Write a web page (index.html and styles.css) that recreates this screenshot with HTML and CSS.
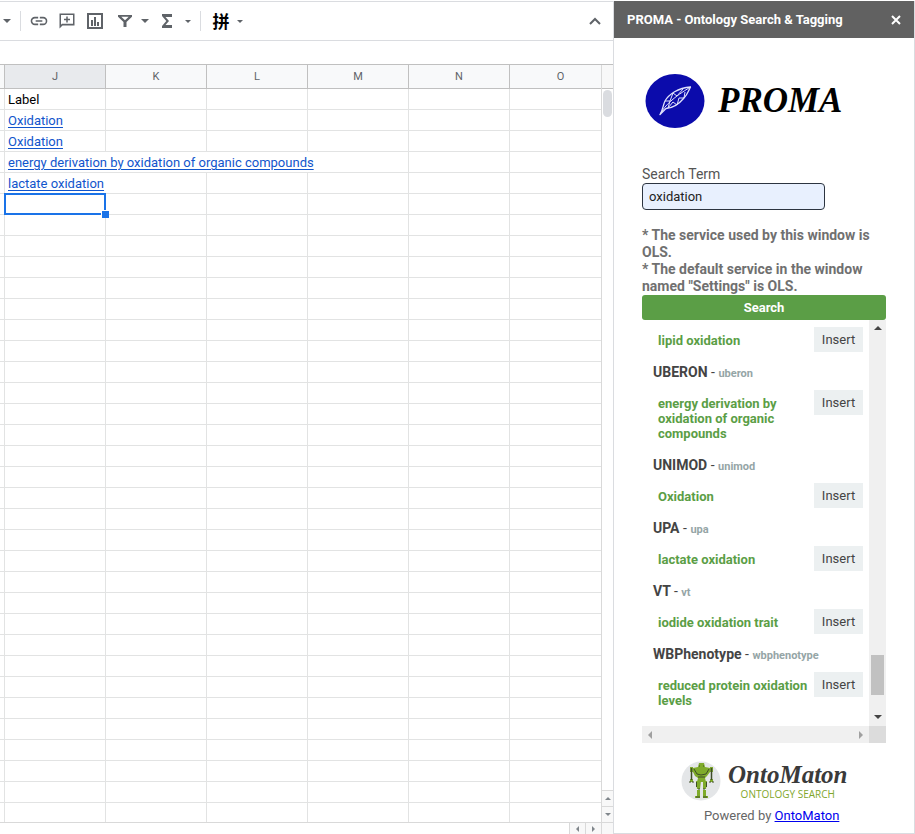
FILE: index.html
```html
<!DOCTYPE html>
<html lang="en">
<head>
<meta charset="utf-8">
<title>PROMA - Ontology Search &amp; Tagging</title>
<link rel="stylesheet" href="styles.css">
</head>
<body>
<div class="app">
  <main class="sheet">
    <div class="toolbar" role="toolbar" aria-label="Formatting">
      <button class="tool tool-arrow" aria-label="More"><svg width="8" height="4" viewBox="0 0 8 4"><path d="M0 0h8L4 4z"/></svg></button>
      <span class="divider"></span>
      <button class="tool" aria-label="Insert link"><svg width="20" height="20" viewBox="0 0 24 24"><path d="M3.9 12c0-1.71 1.39-3.1 3.1-3.1h4V7H7a5 5 0 0 0 0 10h4v-1.9H7c-1.71 0-3.1-1.39-3.1-3.1zM8 13h8v-2H8v2zm9-6h-4v1.9h4a3.1 3.1 0 0 1 0 6.2h-4V17h4a5 5 0 0 0 0-10z"/></svg></button>
      <button class="tool" aria-label="Insert comment"><svg width="18" height="18" viewBox="0 0 24 24"><path d="M2 2h20v16H6l-4 4V2zm2 2v13l1.200-1.200H20V4H4zm7 2h2v3h3v2h-3v3h-2v-3H8V9h3V6z"/></svg></button>
      <button class="tool" aria-label="Insert chart"><svg width="18" height="18" viewBox="0 0 18 18"><path d="M1 1h16v16H1V1zm2 2v12h12V3H3zm2 5h2v6H5V8zm3-3h2v9H8V5zm3 5h2v4h-2v-4z"/></svg></button>
      <button class="tool tool-filter" aria-label="Create a filter"><svg width="16" height="16" viewBox="0 0 16 16"><path d="M1 2h14v1.800L9.500 9v5h-3V9L1 3.800V2zm3.300 1.800L8 7.300l3.700-3.500H4.300z"/></svg></button>
      <button class="tool tool-arrow" aria-label="Filter views"><svg width="8" height="4" viewBox="0 0 8 4"><path d="M0 0h8L4 4z"/></svg></button>
      <button class="tool tool-sum" aria-label="Functions"><svg width="12" height="14" viewBox="0 0 12 14"><path d="M1 0h10v3H4.500L8 7l-3.500 4H11v3H1v-2l4.300-5L1 2z"/></svg></button>
      <button class="tool tool-small" aria-label="More functions"><svg width="6" height="3" viewBox="0 0 6 3"><path d="M0 0h6L3 3z"/></svg></button>
      <span class="divider"></span>
      <button class="tool tool-text" lang="zh">拼</button>
      <button class="tool tool-small" aria-label="Input tools"><svg width="6" height="3" viewBox="0 0 6 3"><path d="M0 0h6L3 3z"/></svg></button>
      <button class="tool tool-end" aria-label="Hide the menus"><svg width="12" height="8" viewBox="0 0 12 8"><path d="M1 7l5-5 5 5" fill="none" stroke="currentColor" stroke-width="2"/></svg></button>
    </div>
    <div class="formula"></div>
    <div class="grid-area">
      <div class="cells">
        <table>
          <colgroup><col class="col-edge"><col class="col"><col class="col"><col class="col"><col class="col"><col class="col"><col></colgroup>
          <thead><tr><th></th><th class="current">J</th><th>K</th><th>L</th><th>M</th><th>N</th><th>O</th></tr></thead>
          <tbody id="rows">
            <tr><td></td><td>Label</td><td></td><td></td><td></td><td></td><td></td></tr>
            <tr><td></td><td><a href="#">Oxidation</a></td><td></td><td></td><td></td><td></td><td></td></tr>
            <tr><td></td><td><a href="#">Oxidation</a></td><td></td><td></td><td></td><td></td><td></td></tr>
            <tr><td></td><td colspan="4"><a href="#">energy derivation by oxidation of organic compounds</a></td><td></td><td></td></tr>
            <tr><td></td><td class="tight"><a href="#">lactate oxidation</a></td><td></td><td></td><td></td><td></td><td></td></tr>
            <tr><td></td><td class="selected"><span class="handle"></span></td><td></td><td></td><td></td><td></td><td></td></tr>
          </tbody>
        </table>
      </div>
      <div class="vbar">
        <div class="vbar-head"></div>
        <div class="vbar-track"><div class="vbar-thumb"></div></div>
        <button aria-label="Scroll up"><svg width="6" height="3" viewBox="0 0 6 3"><path d="M0 3h6L3 0z"/></svg></button>
        <button aria-label="Scroll down"><svg width="6" height="3" viewBox="0 0 6 3"><path d="M0 0h6L3 3z"/></svg></button>
      </div>
    </div>
    <div class="hbar">
      <button aria-label="Scroll left"><svg width="3" height="6" viewBox="0 0 3 6"><path d="M3 0v6L0 3z"/></svg></button>
      <button aria-label="Scroll right"><svg width="3" height="6" viewBox="0 0 3 6"><path d="M0 0v6l3-3z"/></svg></button>
      <span class="corner"></span>
    </div>
  </main>

  <aside class="sidebar">
    <header class="side-head">
      <h1>PROMA - Ontology Search &amp; Tagging</h1>
      <button class="close" aria-label="Close"><svg width="10" height="10" viewBox="0 0 10 10"><path d="M1 1l8 8M9 1L1 9" stroke="#fff" stroke-width="2"/></svg></button>
    </header>
    <div class="side-body">
      <div class="brand">
        <svg width="60" height="54" viewBox="0 0 60 54"><ellipse cx="30" cy="27" rx="29.500" ry="27" fill="#0b0bab"/><g fill="none" stroke="#dfe1fb" stroke-linejoin="round"><path d="M15 40.500C18 36 18 31 20 27C24 20 33 14 45.500 13C43 18 42 21 39 24C34 30 28 34 21 34.500Z" stroke-width="1.300"/><path d="M15 40.500C20 31 29 23 45.500 13M20 27l5 0 3-8 4 3 6-7M25 27l-2 7 5-6 4 3 2-7 5 0 1-6"/></g></svg>
        <span class="wordmark">PROMA</span>
      </div>
      <form class="search">
        <label for="term">Search Term</label>
        <input id="term" type="text" value="oxidation">
        <p>* The service used by this window is OLS.<br>* The default service in the window named "Settings" is OLS.</p>
        <button type="button">Search</button>
      </form>
      <div class="results">
        <div class="list">
          <div class="item"><a href="#">lipid oxidation</a><button>Insert</button></div>
          <h2>UBERON <span>-</span> <small>uberon</small></h2>
          <div class="item"><a href="#">energy derivation by oxidation of organic compounds</a><button>Insert</button></div>
          <h2>UNIMOD <span>-</span> <small>unimod</small></h2>
          <div class="item"><a href="#">Oxidation</a><button>Insert</button></div>
          <h2>UPA <span>-</span> <small>upa</small></h2>
          <div class="item"><a href="#">lactate oxidation</a><button>Insert</button></div>
          <h2>VT <span>-</span> <small>vt</small></h2>
          <div class="item"><a href="#">iodide oxidation trait</a><button>Insert</button></div>
          <h2>WBPhenotype <span>-</span> <small>wbphenotype</small></h2>
          <div class="item"><a href="#">reduced protein oxidation levels</a><button>Insert</button></div>
        </div>
        <div class="rail rail-v"><svg width="8" height="4" viewBox="0 0 8 4"><path d="M0 4h8L4 0z"/></svg><span class="rail-thumb"></span><svg width="8" height="4" viewBox="0 0 8 4"><path d="M0 0h8L4 4z"/></svg></div>
        <div class="rail rail-h"><svg width="4" height="8" viewBox="0 0 4 8"><path d="M4 0v8L0 4z"/></svg><svg width="4" height="8" viewBox="0 0 4 8"><path d="M0 0v8l4-4z"/></svg></div>
        <div class="rail-corner"></div>
      </div>
      <footer>
        <div class="onto">
          <svg width="40" height="40" viewBox="0 0 40 40"><circle cx="20" cy="20" r="19.500" fill="#e4e6e8"/><g fill="#7fab2b"><path d="M18 2h5l1 4 5 1v4l-3 4-2 2 1 4h-9l1-4-3-2-2-4V7l5-1z"/><path d="M15 20h5l-1 8h-3zM22 20h4l-1 8h-3zM16 29h3v6h-3zM22 29h3v6h-3zM14 35h5v2h-5zM22 35h5v2h-5z"/><path d="M9 6h3v5H9zM29 6h3v5h-3zM9 18h3v3H9zM29 18h3v3h-3z"/></g><g fill="none" stroke="#3f4d28"><path d="M10.500 7v12M30.500 7v12" stroke-width="1.500"/><path d="M13 8l3 5 4 1 5-1 3-5M18 5h1M22 5h1M17 16h7M15.500 21v5M25.500 21v5M17 28h2M22 28h2M15 36h4M22 36h4M9 20v2M12 20v2M29 20v2M32 20v2"/></g></svg>
          <div class="onto-text"><span class="onto-name">OntoMaton</span><span class="onto-sub">ONTOLOGY SEARCH</span></div>
        </div>
        <p>Powered by <a href="#">OntoMaton</a></p>
      </footer>
    </div>
  </aside>
</div>
<script src="rows.js"></script>
</body>
</html>
```
FILE: rows.js
```js
// Fill the rest of the sheet with empty rows.
const body = document.getElementById('rows');
for (let i = 0; i < 60; i++) {
  const row = body.insertRow();
  for (let c = 0; c < 7; c++) row.insertCell();
}
```
FILE: styles.css
```css
* { box-sizing: border-box; }
body { margin: 0; background: #fff; font-family: Roboto, "Liberation Sans", sans-serif; }
button { border: 0; padding: 0; background: none; font-family: inherit; }
svg { display: block; fill: currentColor; flex: none; }
h1, h2, p { margin: 0; }

.app { height: 100vh; padding-top: 1px; display: grid; grid-template-columns: minmax(0, 1fr) 302px; overflow: hidden; }

/* Spreadsheet */
.sheet { display: flex; flex-direction: column; min-width: 0; min-height: 0; border-top: 1px solid #dadce0; }
.toolbar { height: 39px; flex: none; display: flex; align-items: center; border-bottom: 1px solid #dadce0; color: #5f6368; padding: 0 12px 0 3px; }
.tool { width: 28px; height: 28px; display: flex; align-items: center; justify-content: center; color: inherit; }
.tool-arrow { width: 8px; }
.tool-filter { width: 32px; }
.tool-sum { width: 36px; }
.tool-small { width: 6px; }
.tool-text { width: 32px; font: bold 17px/20px "Noto Sans CJK SC", sans-serif; color: #000; }
.tool-end { width: 12px; margin-left: auto; }
.divider { width: 1px; height: 20px; background: #dadce0; margin: 0 4px 0 9px; }
.formula { height: 23px; flex: none; }

.grid-area { flex: 1; min-height: 0; display: flex; border-top: 1px solid #c0c0c0; }
.cells { flex: 1; min-width: 0; overflow: hidden; }
table { width: 100%; min-width: 611px; table-layout: fixed; border-collapse: separate; border-spacing: 0; }
.col-edge { width: 5px; }
.col { width: 101px; }
th { height: 24px; padding: 0; background: #f8f9fa; border: solid #c0c0c0; border-width: 0 1px 1px 0; font-size: 11px; font-weight: 400; color: #5f6368; }
th:last-child { border-right: 0; }
th.current { background: #e8eaed; }
td { height: 21px; padding: 1px 3px 0; border: solid #e2e3e3; border-width: 0 1px 1px 0; font: 13px/19px Roboto, sans-serif; white-space: nowrap; color: #000; }
td:first-child { padding: 0; }
td:last-child { border-right: 0; }
td a { color: #1155cc; text-underline-offset: 2px; }
td.tight { padding-right: 0; border-right-color: #fff; }
td.selected { position: relative; }
td.selected::before { content: ""; position: absolute; inset: -1px; border: 2px solid #1a73e8; }
.handle { position: absolute; right: -4px; bottom: -4px; width: 8px; height: 8px; background: #1a73e8; border: solid #fff; border-width: 1px 0 0 1px; }

.vbar { width: 12px; flex: none; display: flex; flex-direction: column; border-left: 1px solid #d9d9d9; color: #80868b; }
.vbar-head { height: 24px; background: #f8f8f8; border-bottom: 1px solid #c0c0c0; }
.vbar-track { flex: 1; padding: 1px; }
.vbar-thumb { height: 27px; border-radius: 5px; background: #dadce0; }
.vbar button { height: 16px; background: #f8f8f8; border-top: 1px solid #d9d9d9; display: flex; align-items: center; justify-content: center; color: inherit; }
.hbar { height: 12px; flex: none; display: flex; justify-content: flex-end; border-top: 1px solid #d9d9d9; color: #80868b; }
.hbar button { width: 16px; background: #f8f8f8; border-left: 1px solid #d9d9d9; display: flex; align-items: center; justify-content: center; color: inherit; }
.corner { width: 12px; background: #f8f8f8; border-left: 1px solid #d9d9d9; }

/* Sidebar */
.sidebar { border: solid #dadce0; border-width: 0 1px 1px; min-height: 0; display: flex; flex-direction: column; }
.side-head { height: 37px; flex: none; background: #616161; color: #fff; display: flex; align-items: center; justify-content: space-between; padding: 0 13px; }
.side-head h1 { font-size: 13px; font-weight: 700; }
.side-body { flex: 1; min-height: 0; display: flex; flex-direction: column; padding: 36px 28px 0; }
.brand { display: flex; align-items: center; gap: 13px; padding-left: 3px; }
.wordmark { font: italic bold 35px/54px "Liberation Serif", serif; color: #000; }

.search { display: flex; flex-direction: column; align-items: flex-start; padding-top: 38px; font-size: 14px; color: #555; }
.search label { line-height: 17px; }
.search input { width: 75%; height: 27px; border: 1px solid #2c3440; border-radius: 4px; background: #e8f0fe; padding: 0 6px; font: 13px Roboto, sans-serif; color: #222; }
.search p { padding: 17px 0 0; line-height: 17px; font-weight: 700; color: #707070; }
.search button { width: 100%; height: 25px; border-radius: 3px; background: #5b9e46; color: #fff; font-size: 13px; font-weight: 700; }

.results { flex: none; height: 423px; display: grid; grid-template: minmax(0, 1fr) 17px / minmax(0, 1fr) 17px; }
.list { overflow: hidden; padding: 7px 6px 0 11px; }
.item { display: flex; align-items: flex-start; justify-content: space-between; }
.item a { flex: 1; padding: 6px 4px 4px 5px; font-size: 13px; line-height: 15px; font-weight: 700; color: #5b9e46; text-decoration: none; }
.item button { width: 49px; height: 25px; flex: none; background: #ecf0f1; color: #444; font-size: 13px; }
.list h2 { margin: 11px 0 7px; font-size: 14px; line-height: 18px; font-weight: 700; color: #444; }
.list h2 span { font-weight: 400; }
.list small { font-size: 11px; font-weight: 700; color: #95a5a6; }
.rail { background: #f0f0f0; display: flex; align-items: center; justify-content: space-between; }
.rail-v { flex-direction: column; padding: 6px 0 7px; color: #444; }
.rail-thumb { width: 13px; height: 40px; background: #c1c1c1; margin: auto 0 20px; }
.rail-h { padding: 0 6px; color: #a0a0a0; }
.rail-corner { background: #dcdcdc; }

footer { padding: 18px 11px 0 39px; font-size: 13px; color: #666; }
.onto { display: flex; gap: 7px; }
.onto-text { display: flex; flex-direction: column; align-items: center; }
.onto-name { font: italic bold 25px/28px "Liberation Serif", serif; color: #3a3a3a; }
.onto-sub { font: 10px/10px "Open Sans", sans-serif; color: #7fa62b; }
footer p { margin: 7px 0 0 23px; line-height: 16px; white-space: nowrap; }
footer a { color: #0000ee; }
```
